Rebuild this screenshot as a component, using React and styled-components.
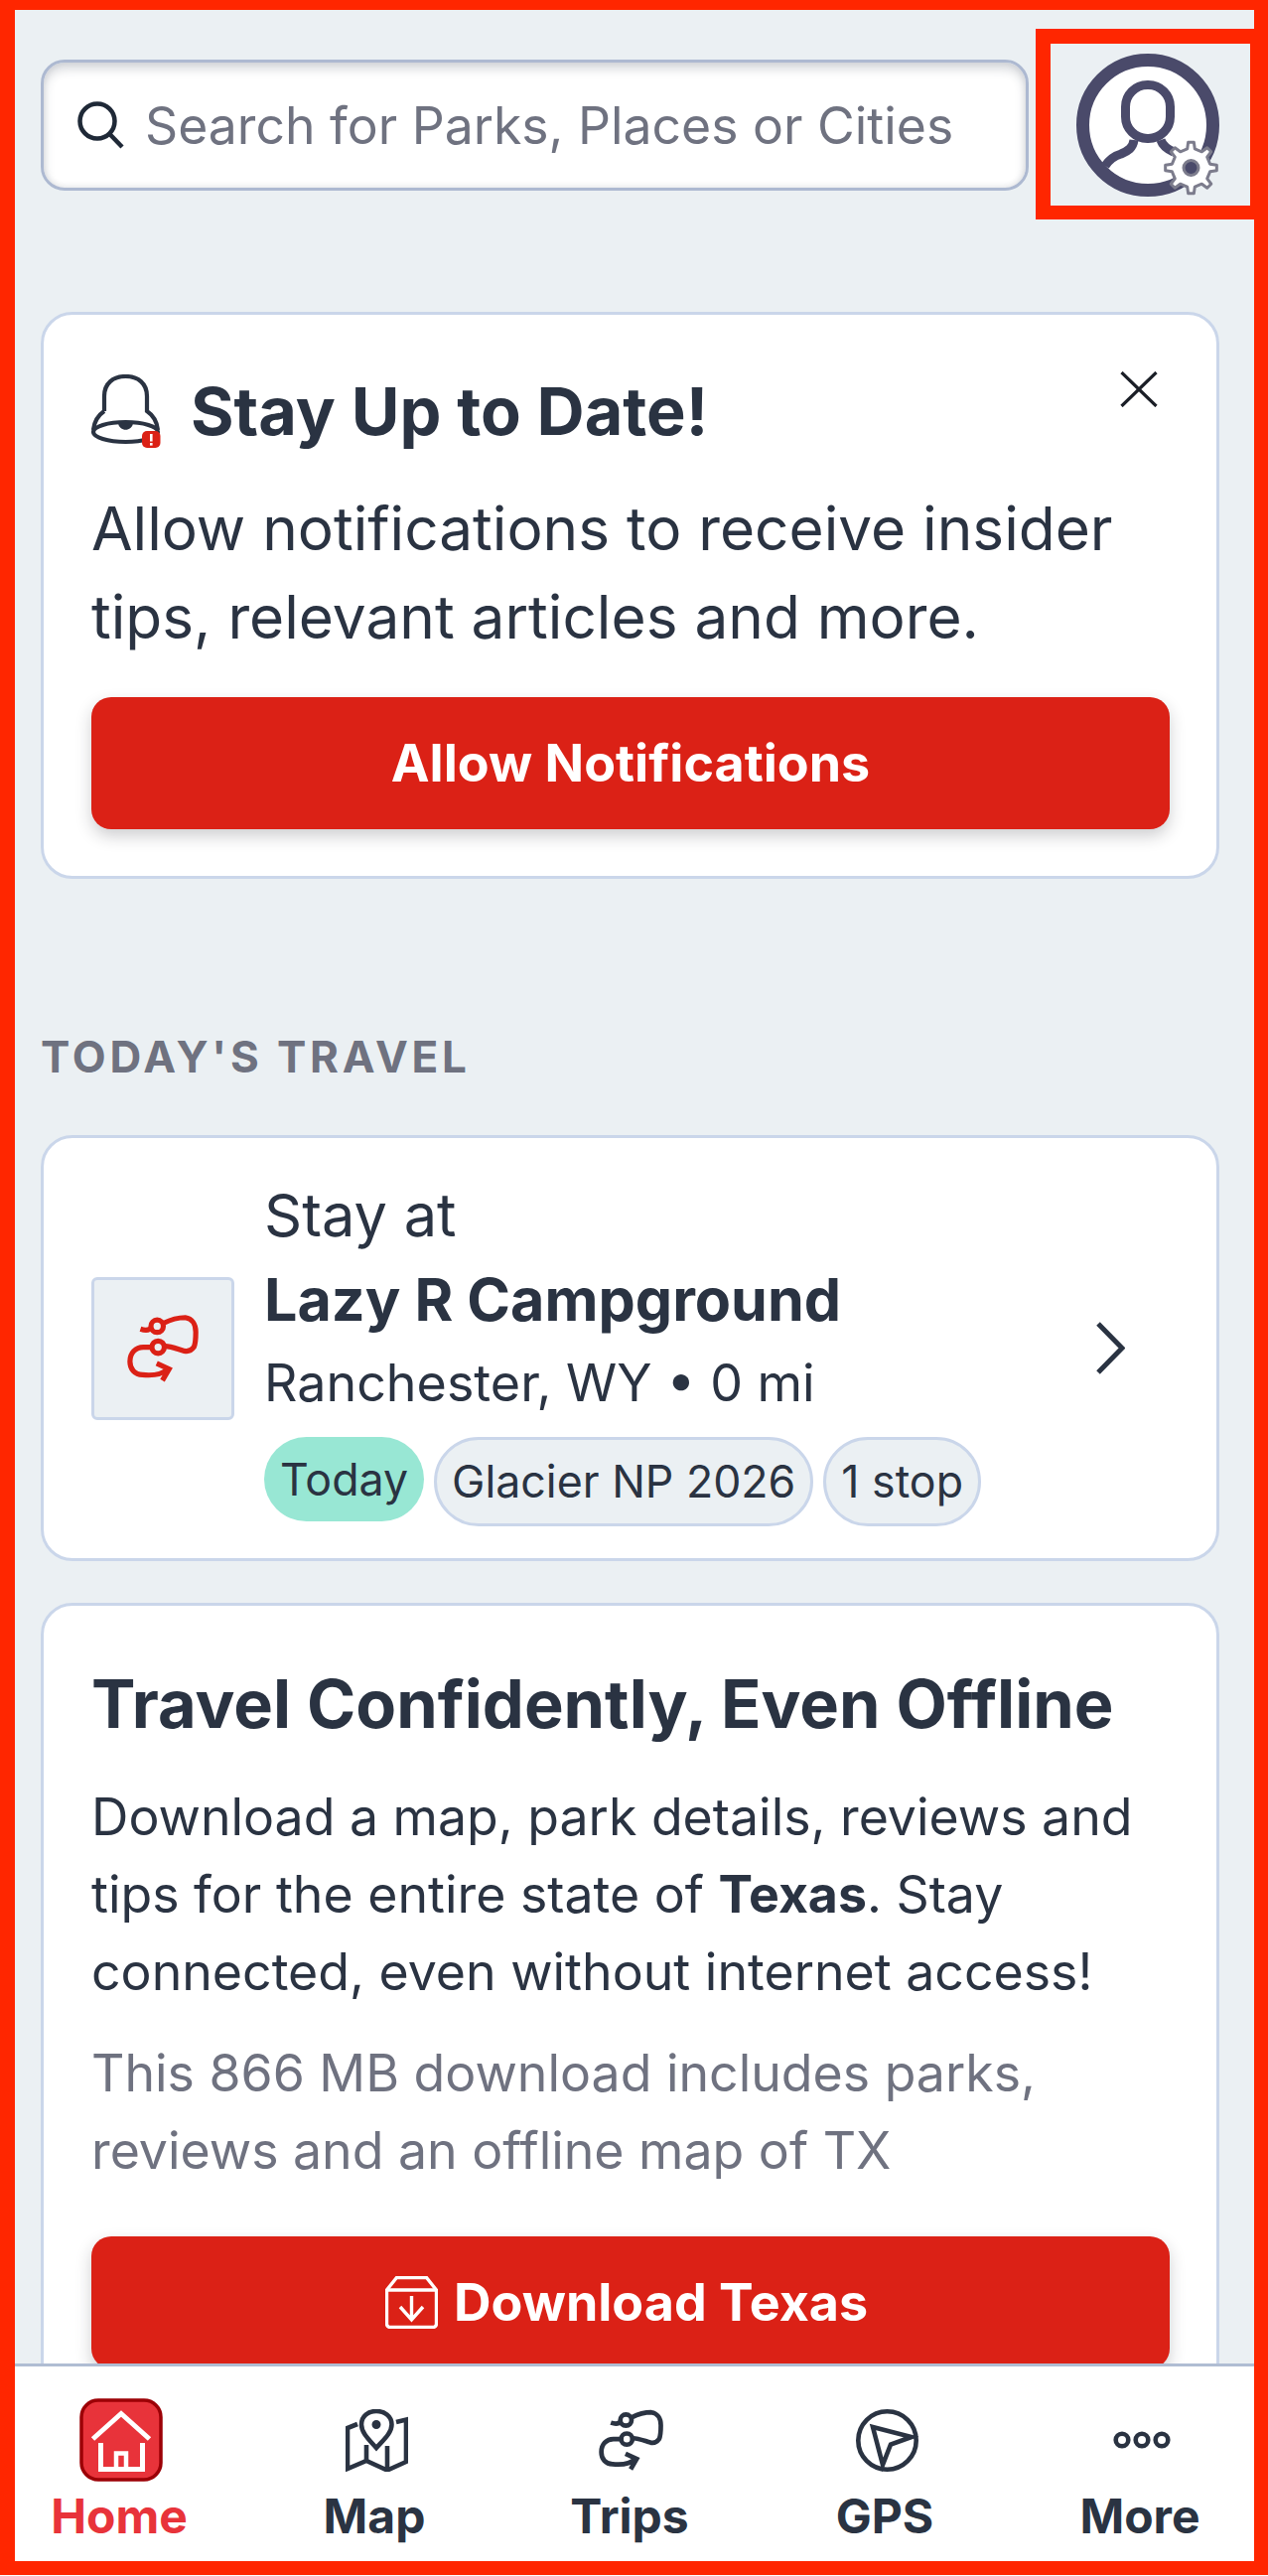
import React from "react";
import styled, { createGlobalStyle } from "styled-components";

const ink = "#2a3342";
const red = "#db2116";
const line = "#cad6ea";

const GlobalStyle = createGlobalStyle`
  html, body {
    margin: 0;
    padding: 0;
    background: #fff;
  }
  * {
    box-sizing: border-box;
  }
`;

const gearPath = (cx, cy, outer, inner, teeth) => {
  const step = (Math.PI * 2) / teeth;
  const pts = [];
  for (let i = 0; i < teeth; i++) {
    const a = i * step - Math.PI / 2;
    const w = step * 0.2;
    pts.push([a - w * 1.25, inner], [a - w * 0.7, outer], [a + w * 0.7, outer], [a + w * 1.25, inner]);
  }
  const coords = pts.map(
    ([a, r]) => `${(cx + Math.cos(a) * r).toFixed(2)} ${(cy + Math.sin(a) * r).toFixed(2)}`
  );
  return `M${coords.join("L")}Z`;
};

const AvatarIcon = () => (
  <svg width="144" height="144" viewBox="0 0 144 144" fill="none">
    <circle cx="72" cy="72" r="65.5" fill="#fff" stroke="#4a4a6a" strokeWidth="13" />
    <rect x="49.5" y="31.5" width="45" height="54" rx="22" stroke="#4a4a6a" strokeWidth="9" />
    <path
      d="M58 87c-1 8-6 11-13 14-7 2-12 6-16 12M85 87c2 6 6 9 13 12"
      stroke="#4a4a6a"
      strokeWidth="9"
    />
    <path d={gearPath(115.5, 115, 26, 19.5, 8)} fill="#fff" stroke="#7c7c8c" strokeWidth="3" strokeLinejoin="round" />
    <circle cx="115.5" cy="115" r="7.5" fill="#4a4a6a" stroke="#7c7c8c" strokeWidth="3" />
  </svg>
);

const SearchIcon = () => (
  <svg width="47" height="48" viewBox="0 0 47 48" fill="none" stroke="#1f2937" strokeWidth="4.5">
    <circle cx="20" cy="20" r="17.5" />
    <path d="M32.5 33 45 46" />
  </svg>
);

const BellIcon = () => (
  <svg width="70" height="74" viewBox="0 0 70 74" fill="none" stroke={ink} strokeWidth="4.2">
    <path d="M13 37V22C13 9 22 2 34.5 2S56 9 56 22v15c6 4 10 10 11 19" />
    <path d="M13 37C7 41 3 47 2 56" />
    <ellipse cx="34.5" cy="58" rx="32.5" ry="10" />
    <path d="M27 49c1 9 14 9 15 0Z" fill={ink} stroke="none" />
    <rect x="51" y="57" width="18.5" height="17" rx="5" fill={red} stroke="none" />
    <rect x="59" y="60" width="2.6" height="7.5" fill="#fff" stroke="none" />
    <rect x="59" y="69" width="2.6" height="2.6" fill="#fff" stroke="none" />
  </svg>
);

const CloseIcon = () => (
  <svg width="38" height="36" viewBox="0 0 38 36" fill="none" stroke="#1b1f27" strokeWidth="3.2">
    <path d="M1.5 1 36.5 35M36.5 1 1.5 35" />
  </svg>
);

const Chevron = () => (
  <svg width="30" height="53" viewBox="0 0 30 53" fill="none" stroke={ink} strokeWidth="5">
    <path d="M3 2 27 26.5 3 51" />
  </svg>
);

const routeD =
  "M47 45c6 2 10 1 12-2M71 39c8-4 16-6 23-6 7 1 11 7 11 15 0 8-1 14-2 16-3 4-6 5-10 4-7-2-14-5-20-5M59 64H50C42 64 36 70 36 79c0 8 5 14 13 14 9 1 20 0 27-6M64 81l13 6-7 12";

const RouteIcon = ({ size, color, weight }) => (
  <svg width={size} height={size} viewBox="33 28 76 74" fill="none" stroke={color} strokeWidth={weight}>
    <path d={routeD} />
    <circle cx="64.5" cy="42" r="6.5" />
    <circle cx="65.5" cy="64" r="6.5" />
  </svg>
);

const DownloadIcon = () => (
  <svg width="53" height="53" viewBox="0 0 53 53" fill="none" stroke="#fff" strokeWidth="3.4">
    <path d="M1.5 14 11.5 1.5h30L51.5 14v34a3.5 3.5 0 0 1-3.5 3.5H5A3.5 3.5 0 0 1 1.5 48Z" />
    <path d="M1.5 14h50M26.5 20v24M15 31l11.5 13L38 31" />
  </svg>
);

const HomeIcon = () => (
  <svg width="84" height="84" viewBox="0 0 84 84" fill="none">
    <rect x="2" y="2" width="80" height="80" rx="17" fill="#e8333a" stroke="#9c0006" strokeWidth="3.5" />
    <g stroke="#fff" strokeWidth="5">
      <path d="M13.5 41 42 15.5 70.5 41" />
      <path d="M21.5 45v26.5h42V45" />
      <path d="M37 72V55.5h10V72" strokeWidth="4.5" />
    </g>
  </svg>
);

const MapIcon = () => (
  <svg width="63" height="63" viewBox="0 0 63 63" fill="none" stroke={ink} strokeWidth="4.6">
    <path d="M31 39C24 31 16 24 16 15.5 16 7 23 2 31 2s15.500 5 15.500 13.500C46.500 24 38 31 31 39Z" />
    <circle cx="31" cy="15.500" r="3.500" fill={ink} stroke={ink} strokeWidth="2" />
    <path d="M12 15 2 19v41l19-8 21 9.500L61 53V10.500L51 13" />
    <path d="M21 36v16M42 37v24" />
  </svg>
);

const GpsIcon = () => (
  <svg width="63" height="63" viewBox="0 0 63 63" fill="none" stroke={ink} strokeWidth="4.6">
    <circle cx="31.5" cy="31.5" r="29.2" />
    <path d="M17 18 56 28 35 35.500 27 56Z" strokeLinejoin="miter" />
  </svg>
);

const MoreIcon = () => (
  <svg width="58" height="63" viewBox="0 0 58 63" fill="none" stroke={ink} strokeWidth="4.6">
    <circle cx="9" cy="31" r="6.300" />
    <circle cx="29" cy="31" r="6.300" />
    <circle cx="49" cy="31" r="6.300" />
  </svg>
);

const Shell = styled.div`
  position: relative;
  width: 1277px;
  height: 2594px;
  overflow: hidden;
  display: flex;
  flex-direction: column;
  font-family: Inter, "Liberation Sans", sans-serif;
  color: ${ink};
  background: #ebf0f3;
`;

const Main = styled.main`
  flex: 1;
  min-height: 0;
  overflow: hidden;
  padding: 54px 49px 0 41px;
`;

const Header = styled.header`
  display: flex;
  align-items: center;
  gap: 48px;
  margin-bottom: 116px;
`;

const SearchBox = styled.div`
  flex: 1;
  height: 132px;
  display: flex;
  align-items: center;
  gap: 21px;
  padding-left: 34px;
  background: #fff;
  border: 3px solid #adb9d1;
  border-radius: 24px;
  box-shadow: inset 0 6px 11px rgba(40, 50, 70, 0.2), inset 0 -1px 6px rgba(40, 50, 70, 0.1);
`;

const Placeholder = styled.span`
  font-size: 51.7px;
  color: #6f7280;
  white-space: nowrap;
`;

const Avatar = styled.div`
  width: 144px;
  height: 144px;
  flex: none;
  display: flex;
`;

const Card = styled.section`
  background: #fff;
  border: 3px solid ${line};
  border-radius: 32px;
`;

const NoticeCard = styled(Card)`
  height: 571px;
  padding: 60px 47px 0 48px;
`;

const NoticeHead = styled.div`
  display: flex;
  align-items: center;
  gap: 30px;
`;

const NoticeTitle = styled.h2`
  margin: 0;
  font-size: 66.6px;
  font-weight: 700;
  line-height: 74px;
  white-space: nowrap;
`;

const CloseButton = styled.span`
  margin-left: auto;
  margin-right: 12px;
  margin-top: -44px;
  display: flex;
`;

const NoticeText = styled.p`
  margin: 37px 0 36px;
  font-size: 60.3px;
  line-height: 89px;
  white-space: nowrap;
`;

const RedButton = styled.div`
  height: 133px;
  display: flex;
  align-items: center;
  justify-content: center;
  gap: 16px;
  background: ${red};
  border-radius: 20px;
  color: #fff;
  font-size: 52px;
  font-weight: 700;
  white-space: nowrap;
  box-shadow: 0 7px 16px rgba(30, 30, 40, 0.22);
`;

const DownloadButton = styled(RedButton)`
  margin-top: 48px;
  padding-right: 8px;
`;

const SectionLabel = styled.h3`
  margin: 154px 0 54px;
  font-size: 44px;
  line-height: 50px;
  font-weight: 700;
  letter-spacing: 3.8px;
  color: #6f7280;
  text-transform: uppercase;
  white-space: nowrap;
`;

const StayCard = styled(Card)`
  height: 429px;
  display: flex;
  align-items: center;
  padding: 4px 0 0 48px;
  margin-bottom: 42px;
`;

const RouteTile = styled.div`
  width: 144px;
  height: 144px;
  flex: none;
  display: flex;
  align-items: center;
  justify-content: center;
  background: #ebf0f3;
  border: 3px solid ${line};
  border-radius: 6px;
  margin-top: -4px;
`;

const StayBody = styled.div`
  margin-left: 30px;
  display: flex;
  flex-direction: column;
`;

const StayLine = styled.div`
  font-size: 59.5px;
  line-height: 82px;
  white-space: nowrap;
`;

const StayName = styled.div`
  font-size: 59.2px;
  line-height: 90px;
  font-weight: 700;
  white-space: nowrap;
`;

const StayPlace = styled.div`
  font-size: 52px;
  line-height: 78px;
  white-space: nowrap;
`;

const TagRow = styled.div`
  margin-top: 15px;
  display: flex;
  align-items: flex-start;
  gap: 10px;
`;

const Tag = styled.span`
  height: ${(p) => (p.$today ? "85px" : "90px")};
  padding: 0 ${(p) => (p.$today ? "16px" : "15px")};
  display: flex;
  align-items: center;
  font-size: 44.7px;
  white-space: nowrap;
  border-radius: 45px;
  background: ${(p) => (p.$today ? "#98e7d4" : "#ebf0f3")};
  border: ${(p) => (p.$today ? "none" : `3px solid ${line}`)};
`;

const StayArrow = styled.span`
  margin-left: auto;
  margin-right: 92px;
  margin-top: -4px;
  display: flex;
`;

const OfflineCard = styled(Card)`
  height: 900px;
  padding: 62px 47px 0 48px;
`;

const OfflineTitle = styled.h2`
  margin: 0 0 37px;
  font-size: 66.7px;
  line-height: 74px;
  font-weight: 700;
  white-space: nowrap;
`;

const OfflineText = styled.p`
  margin: 0 0 24px;
  font-size: 51.8px;
  line-height: 78px;
  white-space: nowrap;
  color: ${(p) => (p.$muted ? "#6f7280" : ink)};
`;

const BottomNav = styled.nav`
  flex: none;
  height: 214px;
  padding: 32px 49px 0 40px;
  display: flex;
  justify-content: space-between;
  background: #fff;
  border-top: 3px solid #b0bdd3;
`;

const NavItem = styled.div`
  width: 160px;
  display: flex;
  flex-direction: column;
  align-items: center;
  gap: 6px;
`;

const NavIconBox = styled.div`
  height: 84px;
  margin-left: 4px;
  display: flex;
  align-items: center;
  justify-content: center;
`;

const NavLabel = styled.span`
  font-size: 48px;
  line-height: 58px;
  font-weight: 700;
  white-space: nowrap;
  color: ${(p) => (p.$active ? "#e8333a" : ink)};
`;

const FrameMark = styled.div`
  position: absolute;
  inset: 0 0 1px 0;
  border-style: solid;
  border-color: #ff2600;
  border-width: 10px 14px 14px 15px;
  pointer-events: none;
`;

const AvatarMark = styled.div`
  position: absolute;
  top: 29px;
  left: 1043px;
  right: 0;
  height: 192px;
  border-style: solid;
  border-color: #ff2600;
  border-width: 15px 18px 14px 15px;
  pointer-events: none;
`;

const navItems = [
  { label: "Home", icon: <HomeIcon />, active: true },
  { label: "Map", icon: <MapIcon /> },
  { label: "Trips", icon: <RouteIcon size={66} color={ink} weight={5.4} /> },
  { label: "GPS", icon: <GpsIcon /> },
  { label: "More", icon: <MoreIcon /> },
];

export default function App() {
  return (
    <Shell>
      <GlobalStyle />
      <Main>
        <Header>
          <SearchBox>
            <SearchIcon />
            <Placeholder>Search for Parks, Places or Cities</Placeholder>
          </SearchBox>
          <Avatar>
            <AvatarIcon />
          </Avatar>
        </Header>

        <NoticeCard>
          <NoticeHead>
            <BellIcon />
            <NoticeTitle>Stay Up to Date!</NoticeTitle>
            <CloseButton>
              <CloseIcon />
            </CloseButton>
          </NoticeHead>
          <NoticeText>
            Allow notifications to receive insider
            <br />
            tips, relevant articles and more.
          </NoticeText>
          <RedButton>Allow Notifications</RedButton>
        </NoticeCard>

        <SectionLabel>Today's Travel</SectionLabel>

        <StayCard>
          <RouteTile>
            <RouteIcon size={73} color={red} weight={5.4} />
          </RouteTile>
          <StayBody>
            <StayLine>Stay at</StayLine>
            <StayName>Lazy R Campground</StayName>
            <StayPlace>Ranchester, WY • 0 mi</StayPlace>
            <TagRow>
              <Tag $today>Today</Tag>
              <Tag>Glacier NP 2026</Tag>
              <Tag>1 stop</Tag>
            </TagRow>
          </StayBody>
          <StayArrow>
            <Chevron />
          </StayArrow>
        </StayCard>

        <OfflineCard>
          <OfflineTitle>Travel Confidently, Even Offline</OfflineTitle>
          <OfflineText>
            Download a map, park details, reviews and
            <br />
            tips for the entire state of <b>Texas</b>. Stay
            <br />
            connected, even without internet access!
          </OfflineText>
          <OfflineText $muted>
            This 866 MB download includes parks,
            <br />
            reviews and an offline map of TX
          </OfflineText>
          <DownloadButton>
            <DownloadIcon />
            Download Texas
          </DownloadButton>
        </OfflineCard>
      </Main>

      <BottomNav>
        {navItems.map((item) => (
          <NavItem key={item.label}>
            <NavIconBox>{item.icon}</NavIconBox>
            <NavLabel $active={item.active}>{item.label}</NavLabel>
          </NavItem>
        ))}
      </BottomNav>

      <FrameMark />
      <AvatarMark />
    </Shell>
  );
}
